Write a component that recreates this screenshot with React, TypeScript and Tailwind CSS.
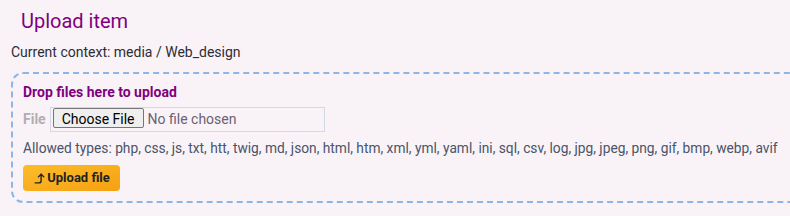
import React from "react";

export default function App() {
  return (
    <div className="w-[790px] h-[216px] overflow-hidden bg-[#f9f3f8] font-['Roboto',sans-serif]">
      <div className="pl-[11px] pt-[7px]">
        <h1 className="pl-[10px] text-[20px] leading-[28px] text-[#800080]">Upload item</h1>
        <p className="mt-[7px] text-[14px] leading-[20px] text-[#2d2d33]">Current context: media / Web_design</p>
        <div className="mt-[10px] mr-[-40px] rounded-[12px] border-2 border-dashed border-[#8db6e4] pl-[10px] pt-[8px] pb-[10px]">
          <div className="text-[14px] leading-[20px] font-bold text-[#800080]">Drop files here to upload</div>
          <div className="mt-[5px] flex items-center gap-[4px]">
            <span className="text-[14px] font-bold text-[#b3acb3]">File</span>
            <input
              type="file"
              className="w-[275px] h-[25px] border border-[#cfdae4] bg-[#f9f3f8] px-[2px] text-[14px] text-[#6b6070] font-['Roboto',sans-serif] file:mr-[4px] file:h-[20px] file:px-[8px] file:py-0 file:text-[14px] file:text-black file:bg-[#efefef] file:border file:border-[#767676] file:rounded-[2px]"
            />
          </div>
          <div className="mt-[6px] text-[13.75px] leading-[20px] text-[#4a5468]">
            Allowed types: php, css, js, txt, htt, twig, md, json, html, htm, xml, yml, yaml, ini, sql, csv, log, jpg, jpeg, png, gif, bmp, webp, avif
          </div>
          <button className="mt-[7px] flex items-center gap-[1px] h-[26px] w-[97px] justify-center rounded-[4px] bg-gradient-to-br from-[#fcbd2a] to-[#f5a00f] text-[13px] font-bold text-[#222]">
            <svg width="13" height="13" viewBox="0 0 24 24" fill="none" stroke="currentColor" strokeWidth="2.5" strokeLinecap="round" strokeLinejoin="round">
              <path d="M10 9l5-5 5 5" />
              <path d="M4 20h7a4 4 0 0 0 4-4V4" />
            </svg>
            Upload file
          </button>
        </div>
      </div>
    </div>
  );
}
